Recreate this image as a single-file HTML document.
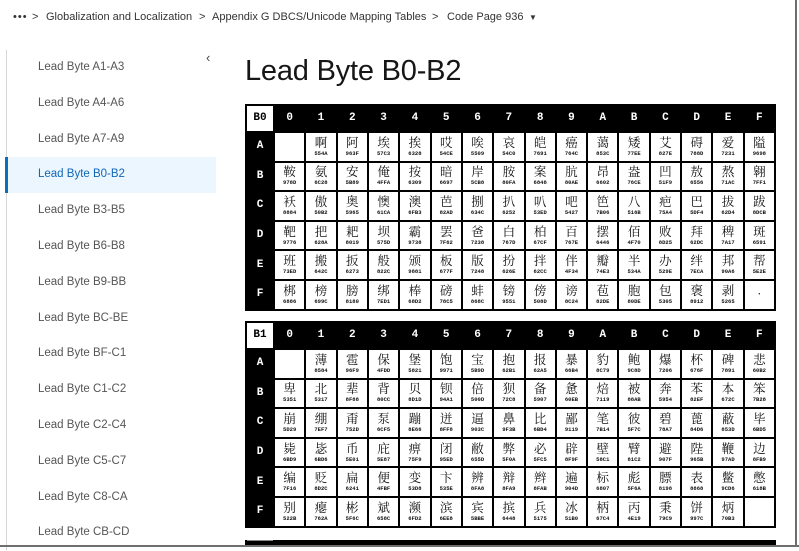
<!DOCTYPE html>
<html><head><meta charset="utf-8">
<style>
*{margin:0;padding:0;box-sizing:border-box}
html,body{width:799px;height:548px;overflow:hidden;background:#fff;font-family:"Liberation Sans","Noto Sans CJK SC",sans-serif}
#frame{position:absolute;right:2px;top:0;width:2px;height:547px;background:#6e6e6e}
#frameb{position:absolute;left:0;top:545px;width:799px;height:2px;background:#6e6e6e}
.bc{position:absolute;top:11px;font-size:11px;color:#333;white-space:nowrap}
.sb{position:absolute;left:6px;top:50px;width:210px;height:500px;border-left:1px solid #d6d6d6}
.it{height:35.8px;line-height:35.8px;padding-left:31px;font-size:11.5px;color:#555}
.it.sel{background:#ebf6fe;color:#1066b8;border-left:3px solid #0f6cbd;margin-left:-2px;padding-left:30px}
h1{position:absolute;left:245px;top:55px;font-size:29px;font-weight:normal;color:#161616;letter-spacing:-0.2px}
table{position:absolute;left:245px;width:531px;border-collapse:separate;border-spacing:2px;background:#000;table-layout:fixed;font-family:"Liberation Serif","Noto Serif CJK SC",serif}
td{background:#fff;text-align:center;vertical-align:middle;height:27.6px;font-size:12.5px;line-height:13px;color:#111;overflow:hidden}
td i{display:block;font-style:normal;font-size:5.5px;line-height:7px;font-family:"Liberation Mono",monospace;font-weight:bold}
tr.h td{background:#000;color:#fff;font-family:"Liberation Mono",monospace;font-weight:bold;font-size:11px;height:25px}
tr.h td.c{background:#fff;color:#000}
td.l{background:#000;color:#fff;font-family:"Liberation Mono",monospace;font-weight:bold;font-size:11px}
</style></head><body>
<div class="bc" style="left:13px;letter-spacing:1px">•••</div>
<div class="bc" style="left:32px">&gt;</div>
<div class="bc" style="left:46px">Globalization and Localization</div>
<div class="bc" style="left:199px">&gt;</div>
<div class="bc" style="left:212px">Appendix G DBCS/Unicode Mapping Tables</div>
<div class="bc" style="left:432px">&gt;</div>
<div class="bc" style="left:447px">Code Page 936</div>
<div class="bc" style="left:529px;font-size:8px;top:13px">▼</div>
<div class="sb">
<div class="it">Lead Byte A1-A3</div>
<div class="it">Lead Byte A4-A6</div>
<div class="it">Lead Byte A7-A9</div>
<div class="it sel">Lead Byte B0-B2</div>
<div class="it">Lead Byte B3-B5</div>
<div class="it">Lead Byte B6-B8</div>
<div class="it">Lead Byte B9-BB</div>
<div class="it">Lead Byte BC-BE</div>
<div class="it">Lead Byte BF-C1</div>
<div class="it">Lead Byte C1-C2</div>
<div class="it">Lead Byte C2-C4</div>
<div class="it">Lead Byte C5-C7</div>
<div class="it">Lead Byte C8-CA</div>
<div class="it">Lead Byte CB-CD</div>
</div>
<div style="position:absolute;left:206px;top:50px;font-size:13px;color:#444">‹</div>
<h1>Lead Byte B0-B2</h1>

<table style="top:104px">
<colgroup><col style="width:26px"><col span="16"></colgroup>
<tr class="h"><td class="c">B0</td><td>0</td><td>1</td><td>2</td><td>3</td><td>4</td><td>5</td><td>6</td><td>7</td><td>8</td><td>9</td><td>A</td><td>B</td><td>C</td><td>D</td><td>E</td><td>F</td></tr>
<tr><td class="l">A</td><td></td><td>啊<i>554A</i></td><td>阿<i>963F</i></td><td>埃<i>57C3</i></td><td>挨<i>6328</i></td><td>哎<i>54CE</i></td><td>唉<i>5509</i></td><td>哀<i>54C0</i></td><td>皑<i>7691</i></td><td>癌<i>764C</i></td><td>蔼<i>853C</i></td><td>矮<i>77EE</i></td><td>艾<i>827E</i></td><td>碍<i>788D</i></td><td>爱<i>7231</i></td><td>隘<i>9698</i></td></tr>
<tr><td class="l">B</td><td>鞍<i>978D</i></td><td>氨<i>6C28</i></td><td>安<i>5B89</i></td><td>俺<i>4FFA</i></td><td>按<i>6309</i></td><td>暗<i>6697</i></td><td>岸<i>5CB8</i></td><td>胺<i>80FA</i></td><td>案<i>6848</i></td><td>肮<i>80AE</i></td><td>昂<i>6602</i></td><td>盎<i>76CE</i></td><td>凹<i>51F9</i></td><td>敖<i>6556</i></td><td>熬<i>71AC</i></td><td>翱<i>7FF1</i></td></tr>
<tr><td class="l">C</td><td>袄<i>8884</i></td><td>傲<i>50B2</i></td><td>奥<i>5965</i></td><td>懊<i>61CA</i></td><td>澳<i>6FB3</i></td><td>芭<i>82AD</i></td><td>捌<i>634C</i></td><td>扒<i>6252</i></td><td>叭<i>53ED</i></td><td>吧<i>5427</i></td><td>笆<i>7B06</i></td><td>八<i>516B</i></td><td>疤<i>75A4</i></td><td>巴<i>5DF4</i></td><td>拔<i>62D4</i></td><td>跋<i>8DCB</i></td></tr>
<tr><td class="l">D</td><td>靶<i>9776</i></td><td>把<i>628A</i></td><td>耙<i>8019</i></td><td>坝<i>575D</i></td><td>霸<i>9738</i></td><td>罢<i>7F62</i></td><td>爸<i>7238</i></td><td>白<i>767D</i></td><td>柏<i>67CF</i></td><td>百<i>767E</i></td><td>摆<i>6446</i></td><td>佰<i>4F70</i></td><td>败<i>8D25</i></td><td>拜<i>62DC</i></td><td>稗<i>7A17</i></td><td>斑<i>6591</i></td></tr>
<tr><td class="l">E</td><td>班<i>73ED</i></td><td>搬<i>642C</i></td><td>扳<i>6273</i></td><td>般<i>822C</i></td><td>颁<i>9881</i></td><td>板<i>677F</i></td><td>版<i>7248</i></td><td>扮<i>626E</i></td><td>拌<i>62CC</i></td><td>伴<i>4F34</i></td><td>瓣<i>74E3</i></td><td>半<i>534A</i></td><td>办<i>529E</i></td><td>绊<i>7ECA</i></td><td>邦<i>90A6</i></td><td>帮<i>5E2E</i></td></tr>
<tr><td class="l">F</td><td>梆<i>6886</i></td><td>榜<i>699C</i></td><td>膀<i>8180</i></td><td>绑<i>7ED1</i></td><td>棒<i>68D2</i></td><td>磅<i>78C5</i></td><td>蚌<i>868C</i></td><td>镑<i>9551</i></td><td>傍<i>508D</i></td><td>谤<i>8C24</i></td><td>苞<i>82DE</i></td><td>胞<i>80DE</i></td><td>包<i>5305</i></td><td>褒<i>8912</i></td><td>剥<i>5265</i></td><td>·</td></tr>
</table>

<table style="top:321px">
<colgroup><col style="width:26px"><col span="16"></colgroup>
<tr class="h"><td class="c">B1</td><td>0</td><td>1</td><td>2</td><td>3</td><td>4</td><td>5</td><td>6</td><td>7</td><td>8</td><td>9</td><td>A</td><td>B</td><td>C</td><td>D</td><td>E</td><td>F</td></tr>
<tr><td class="l">A</td><td></td><td>薄<i>8584</i></td><td>雹<i>96F9</i></td><td>保<i>4FDD</i></td><td>堡<i>5821</i></td><td>饱<i>9971</i></td><td>宝<i>5B9D</i></td><td>抱<i>62B1</i></td><td>报<i>62A5</i></td><td>暴<i>66B4</i></td><td>豹<i>8C79</i></td><td>鲍<i>9C8D</i></td><td>爆<i>7206</i></td><td>杯<i>676F</i></td><td>碑<i>7891</i></td><td>悲<i>60B2</i></td></tr>
<tr><td class="l">B</td><td>卑<i>5351</i></td><td>北<i>5317</i></td><td>辈<i>8F88</i></td><td>背<i>80CC</i></td><td>贝<i>8D1D</i></td><td>钡<i>94A1</i></td><td>倍<i>500D</i></td><td>狈<i>72C8</i></td><td>备<i>5907</i></td><td>惫<i>60EB</i></td><td>焙<i>7119</i></td><td>被<i>88AB</i></td><td>奔<i>5954</i></td><td>苯<i>82EF</i></td><td>本<i>672C</i></td><td>笨<i>7B28</i></td></tr>
<tr><td class="l">C</td><td>崩<i>5D29</i></td><td>绷<i>7EF7</i></td><td>甭<i>752D</i></td><td>泵<i>6CF5</i></td><td>蹦<i>8E66</i></td><td>迸<i>8FF8</i></td><td>逼<i>903C</i></td><td>鼻<i>9F3B</i></td><td>比<i>6BD4</i></td><td>鄙<i>9119</i></td><td>笔<i>7B14</i></td><td>彼<i>5F7C</i></td><td>碧<i>78A7</i></td><td>蓖<i>84D6</i></td><td>蔽<i>853D</i></td><td>毕<i>6BD5</i></td></tr>
<tr><td class="l">D</td><td>毙<i>6BD9</i></td><td>毖<i>6BD6</i></td><td>币<i>5E01</i></td><td>庇<i>5E87</i></td><td>痹<i>75F9</i></td><td>闭<i>95ED</i></td><td>敝<i>655D</i></td><td>弊<i>5F0A</i></td><td>必<i>5FC5</i></td><td>辟<i>8F9F</i></td><td>壁<i>58C1</i></td><td>臂<i>81C2</i></td><td>避<i>907F</i></td><td>陛<i>965B</i></td><td>鞭<i>97AD</i></td><td>边<i>8FB9</i></td></tr>
<tr><td class="l">E</td><td>编<i>7F16</i></td><td>贬<i>8D2C</i></td><td>扁<i>6241</i></td><td>便<i>4FBF</i></td><td>变<i>53D8</i></td><td>卞<i>535E</i></td><td>辨<i>8FA8</i></td><td>辩<i>8FA9</i></td><td>辫<i>8FAB</i></td><td>遍<i>904D</i></td><td>标<i>6807</i></td><td>彪<i>5F6A</i></td><td>膘<i>8198</i></td><td>表<i>8868</i></td><td>鳖<i>9CD6</i></td><td>憋<i>618B</i></td></tr>
<tr><td class="l">F</td><td>别<i>522B</i></td><td>瘪<i>762A</i></td><td>彬<i>5F6C</i></td><td>斌<i>658C</i></td><td>濒<i>6FD2</i></td><td>滨<i>6EE8</i></td><td>宾<i>5BBE</i></td><td>摈<i>6448</i></td><td>兵<i>5175</i></td><td>冰<i>51B0</i></td><td>柄<i>67C4</i></td><td>丙<i>4E19</i></td><td>秉<i>79C9</i></td><td>饼<i>997C</i></td><td>炳<i>70B3</i></td><td></td></tr>
</table>

<div style="position:absolute;left:245px;top:540px;width:531px;height:5px;background:#000"></div>
<div style="position:absolute;left:247px;top:540px;width:26px;height:1px;background:#888"></div>
<div id="frame"></div><div id="frameb"></div>
</body></html>
